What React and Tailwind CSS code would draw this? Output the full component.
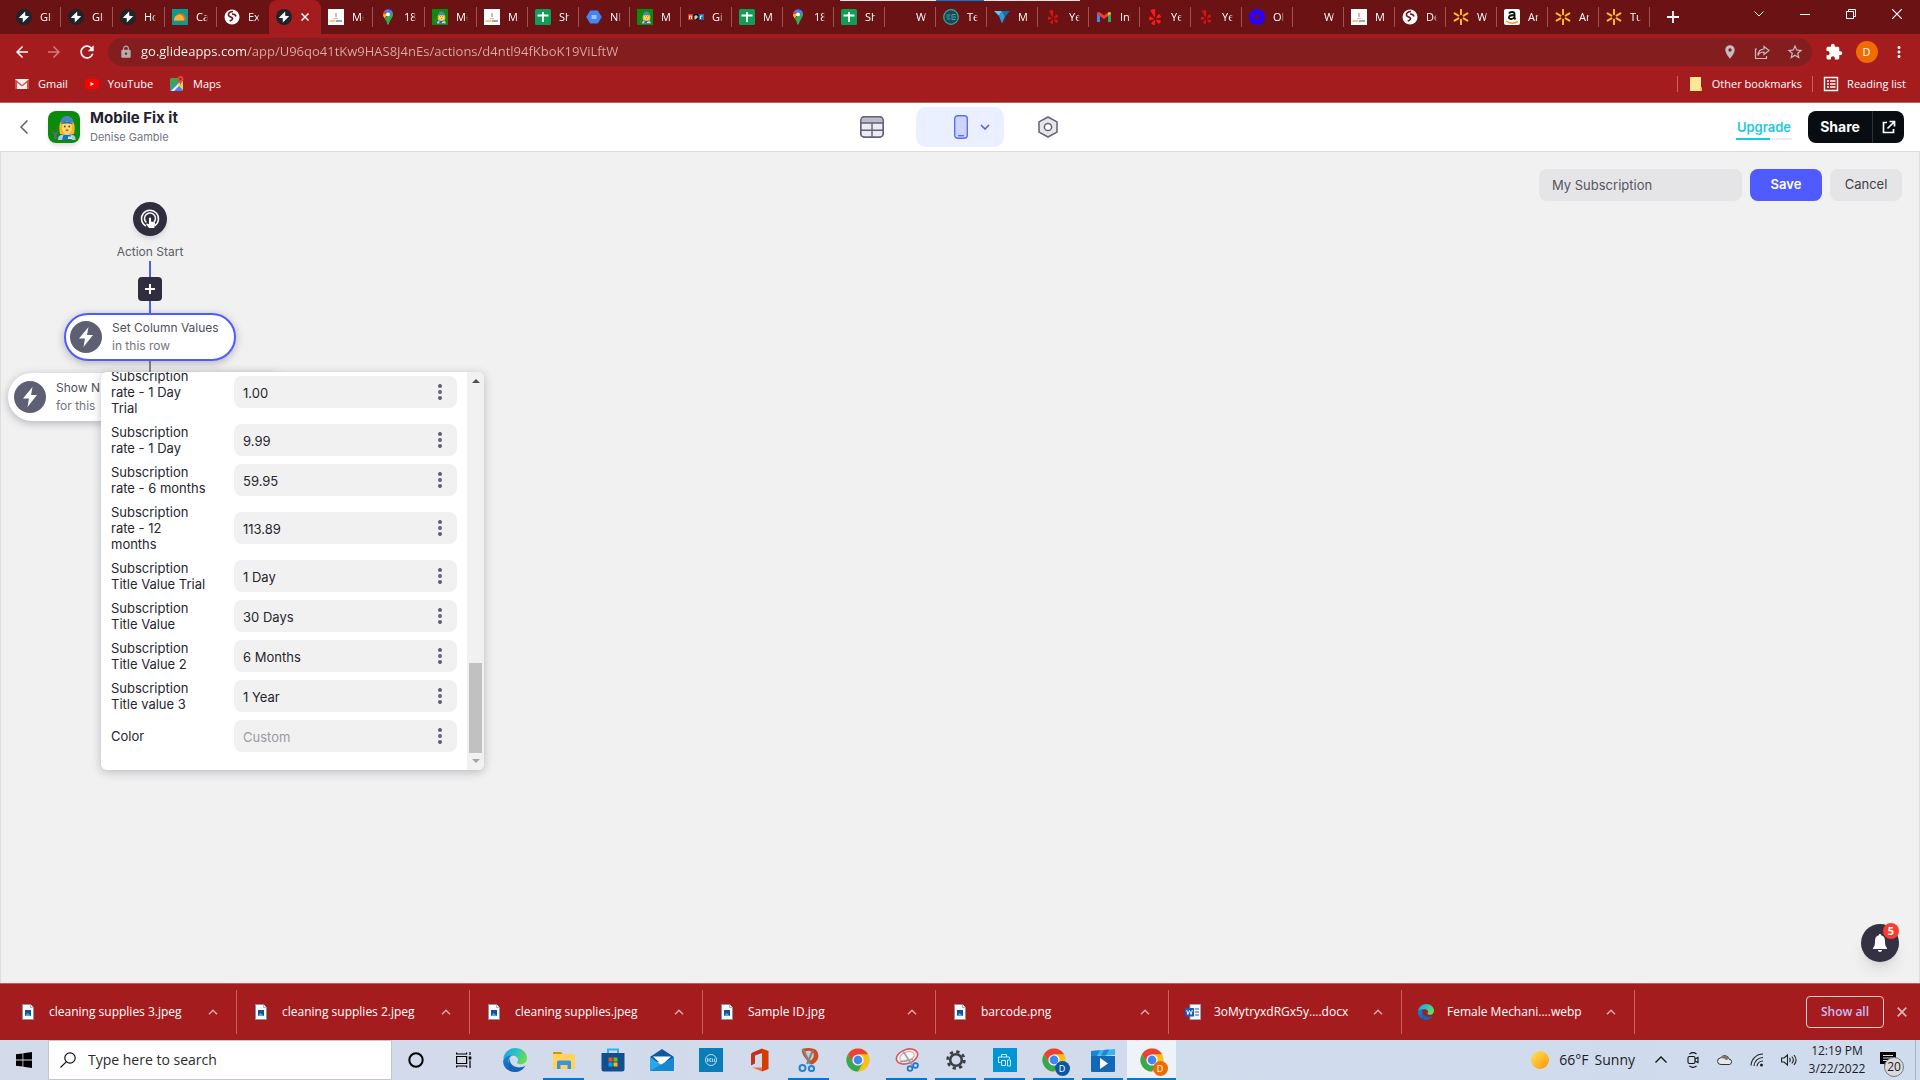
import clsx from 'clsx'
import { FaYelp } from 'react-icons/fa'
import { MdArrowBack, MdArrowForward, MdRefresh, MdLock, MdPlace, MdStarBorder, MdExtension, MdMoreVert } from 'react-icons/md'

/* ---------- favicons ---------- */

const GlideIcon = () => (
  <svg viewBox="0 0 16 16" className="size-4">
    <circle cx="8" cy="8" r="8" fill="#20242b" />
    <path d="M9.2 2.6v4.2l4 .4-6.4 6.2V9.2l-4-.4z" fill="#fff" />
  </svg>
)

const TacoIcon = () => (
  <svg viewBox="0 0 16 16" className="size-4">
    <rect width="16" height="16" fill="#0b9a8d" />
    <path d="M2 11.5C2 7 5 4.5 8.5 4.5S14 7 14 11.5z" fill="#d8741b" />
    <path d="M2 11.5C2 8 4.5 5.8 7.5 5.8s4.500 2.200 4.500 5.700z" fill="#fbb040" />
  </svg>
)

const GlobeIcon = () => (
  <svg viewBox="0 0 16 16" className="size-4">
    <circle cx="8" cy="8" r="7.5" fill="#fff" />
    <path d="M9 2.5C6 2.5 4 4 4.5 6.2c.5 1.8 3.5 1.600 4 3 .4 1.500-1.500 2.300-2.800 2.800M8 5c2 0 3.500.5 4 2.500" fill="none" stroke="#6b1214" strokeWidth="1.6" />
  </svg>
)

const PageThumbIcon = () => (
  <svg viewBox="0 0 16 16" className="size-4">
    <rect width="16" height="16" fill="#fff" />
    <path d="M7 4h2v4H7zM6 9h4v1H6z" fill="#c9bfa6" />
    <path d="M1.5 12h6" stroke="#e9a23b" strokeWidth="1.2" />
    <path d="M8 12h6" stroke="#6d6d6d" strokeWidth="1.2" />
  </svg>
)

const MapsPinIcon = () => (
  <svg viewBox="0 0 16 16" className="size-4">
    <path d="M3 6.2A5 5 0 0 1 4.2 2L8 5.5z" fill="#ea4335" />
    <path d="M4.2 2A5 5 0 0 1 9.8.6L8 5.5z" fill="#4285f4" />
    <path d="M9.8.6A5.3 5.3 0 0 1 13 4L7 9z" fill="#4285f4" />
    <path d="M3 5.5C3 7 3.6 8 4.5 9.2L9.5 4z" fill="#fbbc04" />
    <path d="M13 4c.8 4-3 6-4.2 11.5H7.2C6.9 12.5 5.5 10.7 4.5 9.2z" fill="#34a853" />
    <circle cx="8" cy="5.4" r="1.9" fill="#fff" />
  </svg>
)

const SheetsIcon = () => (
  <svg viewBox="0 0 16 16" className="size-4">
    <rect width="16" height="16" rx="1.5" fill="#0f9d58" />
    <path d="M8 3v10M2.5 6.5h11" stroke="#fff" strokeWidth="1.8" />
  </svg>
)

const MechanicIcon = ({ className }) => (
  <svg viewBox="0 0 32 32" className={className}>
    <rect width="32" height="32" fill="#0b8a0b" />
    <path d="M12.500 11c-2 4-1 8-.5 12h14c.5-4 1.500-8-.5-12z" fill="#fbb52d" />
    <path d="M10 28c0-3.500 3-5 9-5s8.500 1.500 8.500 5v1H10z" fill="#a9cbe6" />
    <path d="M15.500 24h7l1.500 5h-10z" fill="#1f6fb2" />
    <path d="M20 25.500h4v2.500h-4z" fill="#cfe3f3" />
    <ellipse cx="19" cy="16.500" rx="5" ry="6.500" fill="#ffdd67" />
    <path d="M12.500 12c0-5 3-7 6.500-7s6.500 2 6.500 7c-4-2-9-2-13 0z" fill="#4287c8" />
    <path d="M13.500 12c3-1.700 8-1.700 11 0v1c-3-.8-8-.8-11 0z" fill="#2f6ca8" />
    <circle cx="16.800" cy="15.500" r=".9" fill="#5d4037" />
    <circle cx="21.200" cy="15.500" r=".9" fill="#5d4037" />
    <ellipse cx="19" cy="19.300" rx="1.500" ry="1" fill="#e5463b" />
    <path d="M4.500 18v2.500l2.500 1.300 2-1.300V18c2 1.500 1.500 4-.5 5V28H6v-5c-2-1-3-3.500-1.500-5z" fill="#5c6b73" />
  </svg>
)

const TabMechanic = () => <MechanicIcon className="size-4" />

const HexBlueIcon = () => (
  <svg viewBox="0 0 16 16" className="size-4">
    <path d="M4.200 1.500h7.600L15.800 8l-4 6.500H4.200L.2 8z" fill="#4385f4" />
    <path d="M5.500 6.500h5v1h-5zM5.500 8.500h5v1h-5z" fill="#fff" />
  </svg>
)

const NprIcon = () => (
  <svg viewBox="0 0 16 16" className="size-4">
    <rect y="5" width="5.3" height="6" fill="#e0391c" />
    <rect x="5.3" y="5" width="5.4" height="6" fill="#111" />
    <rect x="10.7" y="5" width="5.3" height="6" fill="#3366b8" />
    <path d="M1.500 10V7h2v3M7 10.500V7h2v2H7M12.500 10V7h2" fill="none" stroke="#fff" />
  </svg>
)

const TechIcon = () => (
  <svg viewBox="0 0 16 16" className="size-4">
    <circle cx="8" cy="8" r="7.3" fill="#24435a" stroke="#24b39b" strokeWidth="1.2" />
    <path d="M3.500 6h4M3.500 8h3M4 10h3.500M12.500 5.500H9v5h3.500M10 8h3" stroke="#24b39b" fill="none" />
  </svg>
)

const VIcon = () => (
  <svg viewBox="0 0 16 16" className="size-4">
    <path d="M0 2h8l-3 5z" fill="#5ac8f0" />
    <path d="M8 2h8l-5 6z" fill="#0d6cb5" />
    <path d="M8 2L5 7l3 7.500L11 8z" fill="#2b9ada" />
    <path d="M11 8l-3 6.500L13 6z" fill="#0b4d87" />
  </svg>
)

const GmailIcon = () => (
  <svg viewBox="0 0 16 16" className="size-4">
    <path d="M1 4v9h3V7z" fill="#4285f4" />
    <path d="M15 4v9h-3V7z" fill="#34a853" />
    <path d="M12 7l3-2.300C15 3 13.400 2.500 12 3.500z" fill="#fbbc04" />
    <path d="M1 4.700C1 3 2.600 2.500 4 3.500l4 3 4-3V7l-4 3-4-3z" fill="#ea4335" />
  </svg>
)

const YelpIcon = () => <FaYelp className="size-4 text-[#ff1a1a]" />
const YelpDimIcon = () => <FaYelp className="size-3.5 text-[#d4140f]" />

const RingIcon = () => (
  <svg viewBox="0 0 16 16" className="size-4">
    <circle cx="8" cy="8" r="5.2" fill="none" stroke="#2a00ff" strokeWidth="5.6" />
  </svg>
)

const SparkIcon = () => (
  <svg viewBox="0 0 16 16" className="size-4">
    <path d="M8 .8v4.400M8 10.800v4.400M1.600 4.400l3.800 2.200M10.600 9.400l3.800 2.200M1.600 11.600l3.800-2.200M10.600 6.600l3.800-2.200" stroke="#fbb62b" strokeWidth="2" strokeLinecap="round" />
  </svg>
)

const AmazonIcon = () => (
  <svg viewBox="0 0 16 16" className="size-4">
    <rect width="16" height="16" rx="2" fill="#fff" />
    <path d="M5 4.500C6 2.500 10.500 2.500 10.500 5v4l1 1.500M10.500 6C7 6 5 6.800 5 8.500c0 2.300 4.500 2 5.500-.5" fill="none" stroke="#111" strokeWidth="1.9" />
    <path d="M2 12c4 2.800 8.500 2.600 12 .3" fill="none" stroke="#f90" strokeWidth="1.4" />
  </svg>
)

const Blank = () => <span className="size-4" />

const tabs = [
  [GlideIcon, 'Gli'], [GlideIcon, 'Gli'], [GlideIcon, 'Ho'], [TacoIcon, 'Ca'], [GlobeIcon, 'Ex'],
  [GlideIcon, ''], [PageThumbIcon, 'Mo'], [MapsPinIcon, '18'], [TabMechanic, 'Mo'], [PageThumbIcon, 'Mo'],
  [SheetsIcon, 'Sh'], [HexBlueIcon, 'NI'], [TabMechanic, 'M'], [NprIcon, 'Gi'], [SheetsIcon, 'M'],
  [MapsPinIcon, '18'], [SheetsIcon, 'Sh'], [Blank, 'W'], [TechIcon, 'Te'], [VIcon, 'M'],
  [YelpDimIcon, 'Ye'], [GmailIcon, 'Inl'], [YelpIcon, 'Ye'], [YelpDimIcon, 'Ye'], [RingIcon, 'Ol'],
  [Blank, 'W'], [PageThumbIcon, 'M'], [GlobeIcon, 'De'], [SparkIcon, 'W'], [AmazonIcon, 'Ar'],
  [SparkIcon, 'Ar'], [SparkIcon, 'Tu'],
]
const ACTIVE_TAB = 5

/* ---------- browser chrome ---------- */

function Tab({ icon: Icon, text, active, noDivider, wide }) {
  return (
    <button
      className={clsx(
        'flex min-w-0 items-center gap-2 pl-[7px] text-left text-[11px]',
        wide ? 'w-[52px]' : 'w-[51px]',
        active && 'rounded-t-lg bg-[#a51c1e]'
      )}
    >
      <span className="flex size-4 shrink-0 items-center justify-center"><Icon /></span>
      {active ? (
        <svg viewBox="0 0 8 8" className="ml-px size-2">
          <path d="M.5.5l7 7M7.500.5l-7 7" stroke="#fff" strokeWidth="1.5" />
        </svg>
      ) : (
        <span className="w-3.5 overflow-hidden whitespace-nowrap [mask-image:linear-gradient(to_right,#000_75%,transparent)]">
          {text}
        </span>
      )}
      <span className={clsx('ml-auto h-5 w-px', !active && !noDivider && 'bg-[#9a5553]')} />
    </button>
  )
}

function TabStrip() {
  return (
    <div className="relative flex h-[34px] items-stretch bg-[#6b1214]">
      <div className="absolute inset-x-0 top-0 flex h-px justify-center">
        <span className="w-24 bg-[#e8e8e8]" />
        <span className="w-12 bg-[#0078d4]" />
        <span className="w-24 bg-[#e8e8e8]" />
      </div>
      <div className="flex min-w-0 flex-1 pl-[9px]">
        {tabs.map(([icon, text], i) => (
          <Tab key={i} icon={icon} text={text} active={i === ACTIVE_TAB} noDivider={i === ACTIVE_TAB - 1} wide={i < 9} />
        ))}
      </div>
      <button className="flex w-[46px] items-center justify-center" aria-label="New tab">
        <svg viewBox="0 0 12 12" className="size-3"><path d="M6 0v12M0 6h12" stroke="#fff" strokeWidth="1.8" /></svg>
      </button>
      <div className="ml-10 flex h-7 w-[184px] *:flex *:flex-1 *:items-center *:justify-center">
        <button aria-label="Search tabs">
          <svg viewBox="0 0 10 6" className="h-1.5 w-2.5"><path d="M.5.5L5 5 9.500.5" stroke="#fff" fill="none" /></svg>
        </button>
        <button aria-label="Minimize">
          <svg viewBox="0 0 10 2" className="h-0.5 w-2.5"><path d="M0 1.500h10" stroke="#fff" /></svg>
        </button>
        <button aria-label="Restore">
          <svg viewBox="0 0 10 10" className="size-2.5"><path d="M.5 2.500h7v7h-7zM2.500 2.500v-2h7v7h-2" stroke="#fff" fill="none" /></svg>
        </button>
        <button aria-label="Close window">
          <svg viewBox="0 0 10 10" className="size-2.5"><path d="M0 0l10 10M10 0L0 10" stroke="#fff" strokeWidth="1.2" /></svg>
        </button>
      </div>
    </div>
  )
}

function AddressBar() {
  return (
    <div className="flex h-8 items-center pt-1">
      <div className="flex w-[108px] items-center gap-3.5 pl-[13px] text-white">
        <button aria-label="Back"><MdArrowBack className="size-[18px]" /></button>
        <button aria-label="Forward" className="text-[#cf7e7e]"><MdArrowForward className="size-[18px]" /></button>
        <button aria-label="Reload"><MdRefresh className="size-5" /></button>
      </div>
      <div className="flex h-7 flex-1 items-center rounded-full bg-[#841e1e] pr-2 pl-[11px] text-[#c4bdbd]">
        <MdLock className="size-3.5 text-[#b3adad]" />
        <input
          aria-label="Address"
          className="ml-2 flex-1 bg-[linear-gradient(90deg,#fff_106px,#dba9a9_106px)] bg-clip-text text-[13px] text-transparent outline-none"
          defaultValue="go.glideapps.com/app/U96qo41tKw9HAS8J4nEs/actions/d4ntl94fKboK19ViLftW"
        />
        <div className="flex items-center gap-4">
          <button aria-label="Location"><MdPlace className="size-4" /></button>
          <button aria-label="Share page">
            <svg viewBox="0 0 16 16" className="size-4" fill="none" stroke="currentColor" strokeWidth="1.2">
              <path d="M3 5H1.500v9.500h11V12M10 2.500l5 4-5 4V8C7 8 5 9 4 11.500 4 7.500 6.500 5 10 5z" />
            </svg>
          </button>
          <button aria-label="Bookmark"><MdStarBorder className="size-[18px]" /></button>
        </div>
      </div>
      <div className="flex w-[108px] items-center justify-between pr-3 pl-[13px] text-white">
        <button aria-label="Extensions"><MdExtension className="size-[18px]" /></button>
        <button aria-label="Profile" className="flex size-[22px] items-center justify-center rounded-full bg-[#ef6c00] text-[11px]">D</button>
        <button aria-label="Menu"><MdMoreVert className="size-[18px]" /></button>
      </div>
    </div>
  )
}

function BookmarksBar() {
  return (
    <div className="flex h-9 items-center justify-between px-3.5 text-[11px] text-white">
      <nav className="flex items-center gap-4">
        <a href="#gmail" className="flex items-center gap-2">
          <svg viewBox="0 0 16 16" className="size-4">
            <path d="M1 3h14v10H1z" fill="#f1f1f1" />
            <path d="M1 13V3l7 6 7-6v10h-2V6.500l-5 4-5-4V13z" fill="#d54b3d" />
          </svg>
          Gmail
        </a>
        <a href="#youtube" className="flex items-center gap-2">
          <svg viewBox="0 0 16 16" className="size-4">
            <rect x="1" y="3" width="14" height="10" rx="2.5" fill="#f00" />
            <path d="M6.500 6v4L10 8z" fill="#fff" />
          </svg>
          YouTube
        </a>
        <a href="#maps" className="flex items-center gap-2">
          <svg viewBox="0 0 16 16" className="size-4">
            <rect x="1" y="2" width="13" height="13" rx="1.5" fill="#34a853" />
            <path d="M1 13.500L8 7l6 6v.5a1.500 1.500 0 0 1-1.500 1.500h-10A1.500 1.500 0 0 1 1 13.500z" fill="#4285f4" />
            <path d="M2 15L13 4l1 2-9 9z" fill="#f1f1f1" />
            <path d="M8 8l6 6v-7z" fill="#fbd04b" />
            <path d="M11.500 0c-2 0-3 1.500-3 3 0 2 3 3.500 3 7 0-3.500 3-5 3-7 0-1.500-1-3-3-3z" fill="#ea4335" />
            <circle cx="11.5" cy="3" r="1" fill="#8b1a10" />
          </svg>
          Maps
        </a>
      </nav>
      <div className="flex items-center gap-2.5">
        <span className="h-4 w-px bg-[#c9625f]" />
        <button className="flex items-center gap-2">
          <svg viewBox="0 0 16 16" className="size-4">
            <path d="M2 1h11v10.500h1V15H2z" fill="#ffe694" />
            <path d="M12 12h2v3h-2z" fill="#e9c55a" />
          </svg>
          Other bookmarks
        </button>
        <span className="h-4 w-px bg-[#c9625f]" />
        <button className="flex items-center gap-2">
          <svg viewBox="0 0 16 16" className="size-4" fill="none" stroke="#fff" strokeWidth="1.4">
            <path d="M1.500 1.500h13v13h-13zM4 5h2M4 8h2M4 11h2M7 5h5.500M7 8h5.500M7 11h5.500" />
          </svg>
          Reading list
        </button>
      </div>
    </div>
  )
}

/* ---------- app ---------- */

function AppHeader() {
  return (
    <header className="grid h-[49px] grid-cols-[1fr_auto_1fr] items-center border-b border-[#dcdcde] bg-white">
      <div className="flex items-center pl-5">
        <button aria-label="Back to apps">
          <svg viewBox="0 0 8 14" className="h-3.5 w-2" fill="none" stroke="#5a5a6e" strokeWidth="1.5"><path d="M7.500.5L1 7l6.500 6.500" /></svg>
        </button>
        <MechanicIcon className="ml-5 size-8 rounded-lg shadow-md" />
        <div className="ml-2.5">
          <h1 className="text-[15px] leading-5 font-bold text-[#22222f]">Mobile Fix it</h1>
          <p className="text-[11px] leading-[18px] text-[#74747f]">Denise Gamble</p>
        </div>
      </div>
      <nav className="flex *:flex *:h-10 *:w-[88px] *:items-center *:justify-center *:rounded-[10px]">
        <button aria-label="Data">
          <svg viewBox="0 0 24 22" className="h-[22px] w-6" fill="none" stroke="#626277" strokeWidth="1.4">
            <rect x=".7" y=".7" width="22.6" height="20.6" rx="4" fill="#ececf0" />
            <path d="M1 7V5a4 4 0 0 1 4-4h14a4 4 0 0 1 4 4v2z" fill="#bdbdc8" stroke="none" />
            <path d="M.7 7h22.600M.7 14.200h22.600M12 7v14" />
            <rect x=".7" y=".7" width="22.6" height="20.6" rx="4" />
          </svg>
        </button>
        <button aria-label="Layout" className="gap-3 bg-[#eaf0ff] pl-6">
          <svg viewBox="0 0 14 24" className="h-6 w-3.5" stroke="#5f6bff" strokeWidth="1.4">
            <rect x=".7" y=".7" width="12.6" height="22.6" rx="3" fill="#cdd5ff" />
            <path d="M4 20.700h6" />
          </svg>
          <svg viewBox="0 0 10 6" className="h-1.5 w-2.5" fill="none" stroke="#4f5bff" strokeWidth="1.6"><path d="M1 1l4 4 4-4" /></svg>
        </button>
        <button aria-label="Settings">
          <svg viewBox="0 0 20 22" className="h-[22px] w-5" stroke="#626277" strokeWidth="1.5" strokeLinejoin="round">
            <path d="M10 1l9 4.800v10.400L10 21l-9-4.800V5.800z" fill="#e6e6ea" />
            <circle cx="10" cy="11" r="3.6" fill="#fff" />
          </svg>
        </button>
      </nav>
      <div className="flex items-center justify-end gap-4 pr-4">
        <a href="#upgrade" className="flex flex-col pt-0.5 text-[13px] leading-[22px] font-semibold text-[#1fc8e0]">
          <span className="px-px">Upgrade</span>
          <span className="flex h-0.5 bg-[#ededf0]"><span className="w-3/5 bg-[#12cbe4]" /></span>
        </a>
        <div className="flex h-8 w-24 overflow-hidden rounded-lg bg-[#070d10] text-white">
          <button className="flex-1 text-sm font-bold">Share</button>
          <button aria-label="Open app" className="flex w-8 items-center justify-center border-l border-[#2c3236]">
            <svg viewBox="0 0 14 14" className="size-3.5" fill="none" stroke="#fff" strokeWidth="1.7">
              <path d="M5 2.500H1.500v10h10V9M7.500 1.500h5v5M12 2L5.500 8.500" />
            </svg>
          </button>
        </div>
      </div>
    </header>
  )
}

const rows = [
  { label: 'Subscription rate - 1 Day Trial', value: '1.00' },
  { label: 'Subscription rate - 1 Day', value: '9.99' },
  { label: 'Subscription rate - 6 months', value: '59.95' },
  { label: 'Subscription rate - 12 months', value: '113.89' },
  { label: 'Subscription Title Value Trial', value: '1 Day' },
  { label: 'Subscription Title Value', value: '30 Days' },
  { label: 'Subscription Title Value 2', value: '6 Months' },
  { label: 'Subscription Title value 3', value: '1 Year' },
  { label: 'Color', value: '' },
]

function ColumnValuesPanel() {
  return (
    <div className="absolute top-[220px] left-[100px] flex overflow-hidden rounded-md bg-white text-[13px] shadow-[0_2px_10px_rgba(60,60,80,0.3)]">
      <div className="-mt-1 flex flex-col gap-2 px-2.5 pb-[18px]">
        {rows.map((row, i) => (
          <div key={row.label} className="flex items-center gap-6">
            <label htmlFor={`column-${i}`} className="w-[99px] leading-4 text-[#26262e]">{row.label}</label>
            <div className="flex h-8 w-[223px] items-center rounded-lg bg-[#f1f1f1] pr-3">
              <input
                id={`column-${i}`}
                defaultValue={row.value}
                placeholder="Custom"
                className="h-8 min-w-0 flex-1 bg-transparent pt-px pl-[9px] text-[#26262e] outline-none placeholder:text-[#9a9aa3]"
              />
              <button aria-label={`${row.label} options`} className="flex w-2.5 justify-center">
                <svg viewBox="0 0 4 16" className="h-4 w-1" fill="#5f5f73">
                  <circle cx="2" cy="2" r="2" /><circle cx="2" cy="8" r="2" /><circle cx="2" cy="14" r="2" />
                </svg>
              </button>
            </div>
          </div>
        ))}
      </div>
      {/* scrollbar */}
      <div className="flex w-[17px] flex-col items-center justify-between bg-[#f1f1f1] py-[7px]">
        <svg viewBox="0 0 8 4" className="h-1 w-2"><path d="M0 4l4-4 4 4z" fill="#505050" /></svg>
        <div className="mt-auto mb-1.5 h-[90px] w-[13px] bg-[#c1c1c1]" />
        <svg viewBox="0 0 8 4" className="h-1 w-2"><path d="M0 0l4 4 4-4z" fill="#a3a3a3" /></svg>
      </div>
    </div>
  )
}

function ActionNode({ title, detail, className }) {
  return (
    <button className={clsx('absolute flex h-12 items-center rounded-full bg-white text-left text-xs leading-[18px] shadow-[0_2px_8px_rgba(60,60,80,0.35)]', className)}>
      <span className="flex size-8 shrink-0 items-center justify-center rounded-full bg-[#5f5f73]">
        <svg viewBox="0 0 14 20" className="h-5 w-3.5"><path d="M9.500 0L0 11.500h6L4.500 20 14 8H8z" fill="#fff" /></svg>
      </span>
      <span className="ml-2.5 flex flex-col whitespace-nowrap">
        <span className="text-[#50505c]">{title}</span>
        <span className="text-[#74747f]">{detail}</span>
      </span>
    </button>
  )
}

function Canvas() {
  return (
    <main className="relative flex-1 border-x border-[#dedee0] bg-[#f1f1f1]">
      <div className="flex justify-end gap-2 pt-[17px] pr-[17px] text-[13px]">
        <input
          aria-label="Action name"
          defaultValue="My Subscription"
          className="h-8 w-[203px] rounded-lg bg-[#e5e5e7] px-[13px] text-[#55555f] outline-none"
        />
        <button className="h-8 w-[72px] rounded-lg bg-[#4f5bff] font-semibold text-white">Save</button>
        <button className="h-8 w-[72px] rounded-lg bg-[#e5e5e7] text-[#40404a]">Cancel</button>
      </div>

      {/* flow graph */}
      <div className="absolute top-[50px] left-[89px] flex w-[120px] flex-col items-center">
        <div className="flex size-[34px] items-center justify-center rounded-full bg-[#2f2d3e] shadow-md">
          <svg viewBox="0 0 20 20" className="size-5" fill="none" stroke="#fff" strokeWidth="1.5">
            <path d="M6 17.200a8.500 8.500 0 1 1 8.500-.3" />
            <path d="M6.300 13.500a5.500 5.500 0 1 1 7.600-.2" />
            <path d="M9 9.500c0-1.300 2-1.300 2 0v3l3.200.8c.7.2 1 .8.8 1.500L14.300 19H9l-3-4c.5-.8 1.500-.8 3 .3z" fill="#fff" stroke="none" />
          </svg>
        </div>
        <p className="mt-[7px] text-xs leading-[18px] text-[#5c5c66]">Action Start</p>
        <div className="h-4 w-0.5 bg-[#4f5bff]" />
        <button aria-label="Add step" className="flex size-6 items-center justify-center rounded bg-[#2f2d3e]">
          <svg viewBox="0 0 10 10" className="size-2.5"><path d="M5 0v10M0 5h10" stroke="#fff" strokeWidth="2" /></svg>
        </button>
        <div className="h-3 w-0.5 bg-[#4f5bff]" />
        <div className="mt-12 h-3 w-0.5 bg-[#85858c]" />
      </div>
      <ActionNode title="Set Column Values" detail="in this row" className="top-[161px] left-[63px] w-[172px] border-2 border-[#4f5bff] pl-1" />
      <ActionNode title="Show N" detail="for this" className="top-[221px] left-[7px] w-[284px] pl-1.5" />
      <ColumnValuesPanel />

      <button aria-label="Notifications" className="absolute right-5 bottom-[21px] flex size-[38px] items-center justify-center rounded-full bg-[#343242] shadow-lg">
        <svg viewBox="0 0 14 18" className="h-[18px] w-3.5" fill="#fff">
          <path d="M7 0c.8 0 1.200.5 1.200 1.200C11 2 12 4 12 7c0 4 .5 5.500 2 7v1H0v-1c1.500-1.500 2-3 2-7 0-3 1-5 3.800-5.800C5.800.5 6.200 0 7 0zM5 16h4c-.2 1.200-1 2-2 2s-1.800-.8-2-2z" />
        </svg>
        <span className="absolute -top-px right-0 flex size-4 items-center justify-center rounded-full bg-[#fb3b2d] font-['Open_Sans',sans-serif] text-[11px] font-bold text-white">5</span>
      </button>
    </main>
  )
}

/* ---------- downloads ---------- */

const ImageFileIcon = () => (
  <svg viewBox="0 0 12 16" className="h-4 w-3">
    <path d="M.5.5h8l3 3v12H.5z" fill="#f7fafc" stroke="#8b9299" />
    <path d="M8.500.5v3h3" fill="#fff" stroke="#8b9299" strokeWidth=".7" />
    <rect x="3" y="6" width="6" height="6" fill="#1b4f9c" />
    <path d="M3 12l2.500-3L9 12z" fill="#3fb0e8" />
  </svg>
)

const WordIcon = () => (
  <svg viewBox="0 0 16 16" className="size-4">
    <path d="M5 .5h10.500v15H5z" fill="#f4f7fb" stroke="#9aa7b8" />
    <path d="M10 5h4M10 8h4M10 11h4" stroke="#2b5cb3" strokeWidth="1.2" />
    <rect y="4" width="9" height="8.5" fill="#185abd" />
    <path d="M1.700 6l1.200 4.500 1.600-4 1.600 4L7.300 6" fill="none" stroke="#fff" />
  </svg>
)

const EdgeIcon = ({ className }) => (
  <svg viewBox="0 0 24 24" className={className}>
    <defs>
      <linearGradient id="edge-top" x1="0" y1="0" x2="1" y2=".4">
        <stop offset="0" stopColor="#1aa0e0" />
        <stop offset=".55" stopColor="#2cc3c4" />
        <stop offset="1" stopColor="#63dd55" />
      </linearGradient>
      <linearGradient id="edge-low" x1="0" y1="0" x2="1" y2="1">
        <stop offset="0" stopColor="#1b86da" />
        <stop offset="1" stopColor="#0c4a9a" />
      </linearGradient>
    </defs>
    <path d="M.3 11C1 4.500 6 0 12.300 0 19 0 24 4.800 24 10c0 4-3 6.300-6.300 6.300-3 0-4.200-1.200-3.400-2.400 2-3-.3-6.200-4.300-6.200C5.500 7.700 1.500 9 .3 11z" fill="url(#edge-top)" />
    <path d="M.2 12.500C1 9 5 7.300 9 7.600c-3 1.300-4 4.400-3 7.500 1.500 4.500 7.500 6.700 14.500 4C18 22.500 14.500 24 11.500 24 5 24-.5 18.500.2 12.500z" fill="url(#edge-low)" />
    <path d="M9 7.600c-4 2.800-2 8.700 2 10.700 3.800 1.800 8.300 1.200 11.400-.6-2.400 4.300-6.400 6.300-10.400 6.300C6 23 3.500 11 9 7.600z" fill="#1464b8" />
  </svg>
)

const downloads = [
  ['cleaning supplies 3.jpeg', ImageFileIcon],
  ['cleaning supplies 2.jpeg', ImageFileIcon],
  ['cleaning supplies.jpeg', ImageFileIcon],
  ['Sample ID.jpg', ImageFileIcon],
  ['barcode.png', ImageFileIcon],
  ['3oMytryxdRGx5y....docx', WordIcon],
  ['Female Mechani....webp', () => <EdgeIcon className="size-4" />],
]

function DownloadShelf() {
  return (
    <div className="flex h-[57px] items-center border-t border-[#b8605f] bg-[#a51c1e] pl-1 text-white">
      {downloads.map(([name, Icon]) => (
        <div key={name} className="flex h-11 w-[233px] items-center border-r border-[#c9625f] pl-4">
          <span className="flex w-4 shrink-0 justify-center"><Icon /></span>
          <a href="#file" className="ml-[13px] whitespace-nowrap">{name}</a>
          <button aria-label={`${name} options`} className="mr-[18px] ml-auto">
            <svg viewBox="0 0 10 6" className="h-1.5 w-2.5"><path d="M1 5.200l4-4 4 4" fill="none" stroke="#d9a9a9" strokeWidth="1.5" /></svg>
          </button>
        </div>
      ))}
      <button className="mr-[13px] ml-auto h-8 w-[78px] rounded border border-[#e6caca] font-semibold text-[#c9bcf5]">Show all</button>
      <button aria-label="Close downloads" className="mr-[13px]">
        <svg viewBox="0 0 10 10" className="size-2.5"><path d="M.7.7l8.600 8.600M9.300.7L.7 9.300" stroke="#dcb5b5" strokeWidth="1.7" /></svg>
      </button>
    </div>
  )
}

/* ---------- taskbar ---------- */

const ExplorerIcon = () => (
  <svg viewBox="0 0 24 24" className="size-6">
    <path d="M1 4h8l2 2.500H1z" fill="#d99200" />
    <path d="M1 6h22v15H1z" fill="#ffd35c" />
    <path d="M5 21v-7a1.500 1.500 0 0 1 1.500-1.500h11A1.500 1.500 0 0 1 19 14v7h-3.500v-4h-7v4z" fill="#3c93dd" />
  </svg>
)

const StoreIcon = () => (
  <svg viewBox="0 0 24 24" className="size-6">
    <path d="M7 6V1.500h10V6" fill="none" stroke="#2bb5f0" strokeWidth="2" />
    <path d="M.5 5h23v16a2.500 2.500 0 0 1-2.500 2.500H3A2.500 2.500 0 0 1 .5 21z" fill="#134f8c" />
    <path d="M7.500 9.500h4v4h-4z" fill="#f25022" /><path d="M12.500 9.500h4v4h-4z" fill="#7fba00" />
    <path d="M7.500 14.500h4v4h-4z" fill="#00a4ef" /><path d="M12.500 14.500h4v4h-4z" fill="#ffb900" />
  </svg>
)

const MailIcon = () => (
  <svg viewBox="0 0 24 24" className="size-6">
    <path d="M0 9l12-8 12 8-6 5H6z" fill="#0f59a4" />
    <path d="M3 8.500h18L12 17z" fill="#fff" />
    <path d="M0 9l12 8.500L24 9v14H0z" fill="#28a8ea" />
    <path d="M0 23L24 9v14z" fill="#1587d3" />
  </svg>
)

const DellIcon = () => (
  <svg viewBox="0 0 24 24" className="size-6">
    <rect width="24" height="24" fill="#0a7db8" />
    <circle cx="12" cy="12" r="5.5" fill="none" stroke="#cfe8f5" strokeWidth=".9" />
    <path d="M8.500 10.500v3M8.500 10.500c2 0 2 3 0 3M12.500 10.500H11v3h1.500M13.500 10.500v3h1M15.500 10.500v3h1" fill="none" stroke="#cfe8f5" strokeWidth=".8" />
  </svg>
)

const OfficeIcon = () => (
  <svg viewBox="0 0 24 24" className="size-6">
    <path d="M14 .5L20.500 3v18L14 23.500z" fill="#d83b01" />
    <path d="M14 .5V5L7 7.500v8l-4 2V7c0-1 .5-2 1.500-2.500z" fill="#c4311f" />
    <path d="M4.500 19.500H14v4z" fill="#ef6b4a" />
  </svg>
)

const SnipIcon = () => (
  <svg viewBox="0 0 24 24" className="size-6">
    <path d="M5 1c5-1.500 12-1.500 15 2 3 5 1 11-5 13.500-3-.5-4-2-5-4C7 9 4 5 5 1z" fill="#cf4a1c" />
    <path d="M8 3.500c3-1 6-1 8 1 2 3 0 6-2 8-2-1-5-5-6-9z" fill="#c7cdd2" />
    <path d="M6 1l7 15M16 2l-6 14" stroke="#7c858c" strokeWidth="2" />
    <circle cx="5.5" cy="20" r="3" fill="none" stroke="#1f86d6" strokeWidth="2" />
    <circle cx="14.5" cy="20.5" r="2.6" fill="none" stroke="#1f86d6" strokeWidth="2" />
  </svg>
)

const SnipSketchIcon = () => (
  <svg viewBox="0 0 24 24" className="size-6">
    <ellipse cx="12" cy="8.5" rx="11" ry="7" transform="rotate(-20 12 8.5)" fill="#f6f6f8" stroke="#dd5660" strokeWidth="1.6" />
    <ellipse cx="12" cy="8.5" rx="7.5" ry="4.500" transform="rotate(-20 12 8.5)" fill="none" stroke="#e79aa0" />
    <path d="M8 3l9 14M5 14l13-3" stroke="#9aa2ab" strokeWidth="1.5" />
    <circle cx="15" cy="20.5" r="2.4" fill="none" stroke="#1f78c8" strokeWidth="1.7" />
    <circle cx="20.5" cy="17.5" r="2.4" fill="none" stroke="#1f78c8" strokeWidth="1.7" />
  </svg>
)

const ChromeLogo = () => (
  <svg viewBox="0 0 24 24" className="size-6">
    <circle cx="12" cy="12" r="11.5" fill="#fbc116" />
    <path d="M2 6.200A11.500 11.500 0 0 1 22 6.200H12L7 15z" fill="#ea4335" />
    <path d="M2 6.200A11.500 11.500 0 0 0 12 23.500l5-8.500H7z" fill="#34a853" />
    <circle cx="12" cy="12" r="5.6" fill="#fff" />
    <circle cx="12" cy="12" r="4.4" fill="#4285f4" />
  </svg>
)

const ChromeBlue = () => (
  <span className="relative">
    <ChromeLogo />
    <span className="absolute -right-1 -bottom-1 flex size-[15px] items-center justify-center rounded-full bg-[#0b57a0] text-[9px] text-white">D</span>
  </span>
)

const ChromeOrange = () => (
  <span className="relative">
    <ChromeLogo />
    <span className="absolute -right-1 -bottom-1 flex size-[15px] items-center justify-center rounded-full bg-[#ef6c00] text-[9px] text-white">D</span>
  </span>
)

const GearIcon = () => (
  <svg viewBox="0 0 20 20" className="size-5" fill="none" stroke="#3c3f45">
    <circle cx="10" cy="10" r="5.8" strokeWidth="2.6" />
    <circle cx="10" cy="10" r="8.3" strokeWidth="2.8" strokeDasharray="3.26 3.26" />
  </svg>
)

const PrinterIcon = () => (
  <svg viewBox="0 0 24 24" className="size-6">
    <rect width="24" height="24" fill="#0096d6" />
    <path d="M8.500 9V6.500h5V9M7.500 14.500h-2V9h11v2M8.500 12.500h4v5h-4zM14.500 12h3v6h-3z" fill="none" stroke="#fff" strokeWidth=".8" />
  </svg>
)

const MoviesIcon = () => (
  <svg viewBox="0 0 24 24" className="size-6">
    <path d="M0 8h24v15a1 1 0 0 1-1 1H1a1 1 0 0 1-1-1z" fill="#1468b8" />
    <path d="M0 3l24-2v6L0 8z" fill="#37b5ee" />
    <path d="M0 3l9-.8L6 8H0zM13 2l5-.5L15 7.400l-5 .3z" fill="#1b86d6" />
    <path d="M9 10v11l8-5.500z" fill="#fff" />
  </svg>
)

const pinned = [
  { name: 'Edge', icon: () => <EdgeIcon className="size-6" /> },
  { name: 'File Explorer', icon: ExplorerIcon, running: true },
  { name: 'Store', icon: StoreIcon },
  { name: 'Mail', icon: MailIcon },
  { name: 'Dell', icon: DellIcon },
  { name: 'Office', icon: OfficeIcon },
  { name: 'Snipping Tool', icon: SnipIcon, running: true },
  { name: 'Chrome', icon: ChromeLogo },
  { name: 'Snip & Sketch', icon: SnipSketchIcon, running: true },
  { name: 'Settings', icon: GearIcon, running: true },
  { name: 'Printer', icon: PrinterIcon, running: true },
  { name: 'Chrome, second profile', icon: ChromeBlue, running: true },
  { name: 'Movies', icon: MoviesIcon, running: true },
  { name: 'Chrome, current window', icon: ChromeOrange, running: true, active: true },
]

function Taskbar() {
  return (
    <footer className="flex h-10 items-center bg-gradient-to-r from-[#d3daea] to-[#cfdcee] text-[#1b1b1f]">
      <button aria-label="Start" className="flex w-12 justify-center">
        <svg viewBox="0 0 16 16" className="size-4" fill="#000">
          <path d="M0 2.300l6.500-.9v6.100H0zM7.300 1.300L16 0v7.500H7.300zM0 8.400h6.500v6.200L0 13.700zM7.300 8.400H16V16l-8.700-1.200z" />
        </svg>
      </button>
      <label className="flex h-10 w-[344px] items-center border border-[#c3c7cf] bg-white pl-[11px]">
        <svg viewBox="0 0 16 16" className="size-4" fill="none" stroke="#111" strokeWidth="1.2">
          <circle cx="10" cy="6" r="5.2" /><path d="M6.200 9.800L.5 15.500" />
        </svg>
        <input aria-label="Search" placeholder="Type here to search" className="ml-3 w-[280px] text-sm outline-none placeholder:text-[#2b2b30]" />
      </label>
      <button aria-label="Cortana" className="flex w-12 justify-center">
        <svg viewBox="0 0 16 16" className="size-4"><circle cx="8" cy="8" r="6.7" fill="none" stroke="#000" strokeWidth="2" /></svg>
      </button>
      <button aria-label="Task view" className="mr-0.5 flex w-12 justify-center">
        <svg viewBox="0 0 16 16" className="size-4" fill="none" stroke="#000" strokeWidth="1.2">
          <path d="M.6 4.500h10v7H.6zM.6.5V2h10V.5M.6 15.500V14h10v1.500M14 0v3M14 8.500V16" /><path d="M14 4.500v3" strokeWidth="2.6" />
        </svg>
      </button>
      {pinned.map(({ name, icon: Icon, running, active }) => (
        <button key={name} aria-label={name} className={clsx('relative flex h-10 w-[49px] items-center justify-center', active && 'bg-[#eef2f9]')}>
          <Icon />
          {running && <span className={clsx('absolute bottom-0 h-0.5 bg-[#0078d4]', active ? 'inset-x-0' : 'inset-x-1')} />}
        </button>
      ))}

      <div className="ml-auto flex items-center">
        <button className="flex items-center gap-2.5 text-sm">
          <svg viewBox="0 0 18 18" className="size-[18px]">
            <defs>
              <linearGradient id="sun" x1="0" y1="0" x2="1" y2="1">
                <stop offset="0" stopColor="#ffe45e" /><stop offset="1" stopColor="#ff9500" />
              </linearGradient>
            </defs>
            <circle cx="9" cy="9" r="9" fill="url(#sun)" />
          </svg>
          <span className="flex gap-1.5"><span>66°F</span><span>Sunny</span></span>
        </button>
        <div className="ml-2.5 flex *:flex *:w-8 *:justify-center">
          <button aria-label="Hidden icons">
            <svg viewBox="0 0 16 16" className="size-4" fill="none" stroke="#111" strokeWidth="1.3"><path d="M2.500 10.500L8 5l5.500 5.500" /></svg>
          </button>
          <button aria-label="Meet now">
            <svg viewBox="0 0 16 16" className="size-4" fill="none" stroke="#111" strokeWidth="1.1">
              <rect x="3" y="4.500" width="7" height="7" rx="1.5" /><path d="M10 7l3-1.500v5L10 9M4.500 2c2-1.500 5-1.500 7 0M4.500 14c2 1.500 5 1.500 7 0" />
            </svg>
          </button>
          <button aria-label="OneDrive">
            <svg viewBox="0 0 16 16" className="size-4" stroke="#333">
              <path d="M4 12.500a3.300 3.300 0 0 1-.3-6.600A4.500 4.500 0 0 1 12 7a2.800 2.800 0 0 1 .5 5.500z" fill="#e8e8ea" />
              <path d="M3.700 6A4.500 4.500 0 0 1 12 7l-3 1-2-1.500z" fill="#777" stroke="none" />
            </svg>
          </button>
          <button aria-label="Network">
            <svg viewBox="0 0 16 16" className="size-4" fill="none" stroke="#222" strokeWidth="1.1">
              <path d="M2 13.500A12 12 0 0 1 14 2M5 14a9 9 0 0 1 9-8.500M8 14.300A6 6 0 0 1 14 9" /><circle cx="12.500" cy="13" r="1.5" fill="#222" stroke="none" />
            </svg>
          </button>
          <button aria-label="Volume">
            <svg viewBox="0 0 16 16" className="size-4" fill="none" stroke="#222" strokeWidth="1.1">
              <path d="M.6 6h2.500L6.500 3v10L3.100 10H.6zM8.500 6c1 1 1 3 0 4M10.800 4.500c1.800 2 1.800 5 0 7M13 3c2.500 3 2.500 7 0 10" />
            </svg>
          </button>
        </div>
        <div className="w-16 text-center leading-[18px]">
          <p>12:19 PM</p>
          <p>3/22/2022</p>
        </div>
        <button aria-label="Action center" className="relative mr-1 flex w-[47px] justify-center border-r border-[#a9b1c0] py-3 pr-2">
          <svg viewBox="0 0 16 16" className="size-4">
            <path d="M0 0h16v12H8l-3.500 3.500V12H0z" fill="#000" />
            <path d="M3 3.500h10M3 6h10M3 8.500h7" stroke="#d3daea" strokeWidth="1.2" />
          </svg>
          <span className="absolute top-[17px] right-[11px] flex size-5 items-center justify-center rounded-full border border-[#77797f] bg-[#d9dadd]">20</span>
        </button>
      </div>
    </footer>
  )
}

export default function App() {
  return (
    <div className="flex min-h-screen flex-col overflow-hidden font-['Open_Sans',sans-serif] text-xs">
      <div className="border-b border-[#b8605f] bg-[#a51c1e] text-white">
        <TabStrip />
        <AddressBar />
        <BookmarksBar />
      </div>
      <div className="flex flex-1 flex-col font-['Inter',sans-serif]">
        <AppHeader />
        <Canvas />
      </div>
      <DownloadShelf />
      <Taskbar />
    </div>
  )
}
